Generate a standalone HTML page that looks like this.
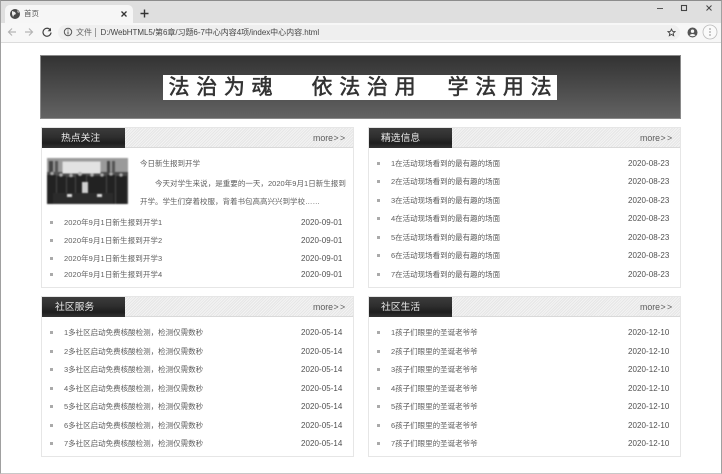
<!DOCTYPE html>
<html lang="zh">
<head>
<meta charset="utf-8">
<title>首页</title>
<style>
html,body{margin:0;padding:0;background:#fff}
body{width:722px;height:474px;position:relative;overflow:hidden;font-family:"Liberation Sans","Noto Sans CJK SC",sans-serif;color:#555}
div,span,svg{position:absolute;white-space:nowrap}
.frame{left:0;top:0;width:720px;height:472px;border:1px solid #a0a0a0;border-bottom:1px solid #c8c8c8;border-top:1px solid #8c8c8c;z-index:9}
.strip{left:1px;top:1px;width:720px;height:22px;background:#dfdfdf}
.tab{left:5px;top:5px;width:128px;height:18px;background:#f6f6f6;border-radius:5px 5px 0 0}
.bar{left:1px;top:23px;width:720px;height:19px;background:#f7f7f7;border-bottom:1px solid #dcdcdc}
.url{left:58px;top:25px;width:622px;height:15px;background:#efefef;border-radius:8px}
.banner{left:40px;top:55px;width:639px;height:62px;background:linear-gradient(#333,#636363);border:1px solid #8a8a8a}
.tbox{left:163px;top:75px;width:394px;height:25px;background:#fff}
.tt{top:74px;font-size:21px;line-height:27px;letter-spacing:6.7px;color:#333;-webkit-text-stroke:.55px #333}
.panel{width:311px;background:#fff;border:1px solid #e6e6e6}
.head{height:19px;background:repeating-linear-gradient(135deg,#e6e6e6 0,#e6e6e6 1px,#f3f3f3 1px,#f3f3f3 2px);border-bottom:1px solid #d9d9d9}
.dark{width:83px;height:20px;background:linear-gradient(#3c3c3c,#2e2e2e 45%,#1e1e1e 75%,#333)}
.ht{font-size:9.800px;line-height:20px;color:#e8e8e8}
.more{font-size:8.800px;line-height:20px;color:#5c5c5c}
.more b{font-weight:normal;letter-spacing:1.300px;margin-left:.5px}
.r{font-size:7.500px;line-height:12px;color:#5e5e5e;margin-top:1px}
.w{letter-spacing:.1px}
.d{font-size:8px;line-height:12px;color:#505050;letter-spacing:.05px;margin-top:1px}
.b{width:3px;height:3px;background:#aaa}
.blur{left:0;top:0;width:722px;height:474px;filter:blur(.35px)}
</style>
</head>
<body>
<div class="blur">
<div class="strip"></div>
<div class="tab"></div>
<svg style="left:9px;top:8px" width="12" height="12" viewBox="0 0 12 12"><circle cx="6" cy="6" r="5" fill="#4a4a4a"/><path d="M3 3l3 1 1 2-2 1-1 2-1-3zM8 2l2 2-1 1z" fill="#eee"/></svg>
<span style="left:24px;top:9px;font-size:7.500px;line-height:10px;color:#555">首页</span>
<svg style="left:120px;top:10px" width="8" height="8" viewBox="0 0 8 8"><path d="M1.500 1.500l5 5M6.500 1.500l-5 5" stroke="#333" stroke-width="1.300"/></svg>
<svg style="left:140px;top:9px" width="9" height="9" viewBox="0 0 9 9"><path d="M4.500 .5v8M.5 4.500h8" stroke="#333" stroke-width="1.400"/></svg>
<svg style="left:657px;top:2px" width="60" height="12" viewBox="0 0 60 12"><path d="M0 6.500h6" stroke="#555"/><rect x="24.500" y="3.500" width="5" height="5" fill="none" stroke="#444" stroke-width="1.100"/><path d="M49.500 3.500l5 5M54.500 3.500l-5 5" stroke="#444"/></svg>
<div class="bar"></div>
<div class="url"></div>
<svg style="left:7px;top:27px" width="10" height="10" viewBox="0 0 10 10"><path d="M9 5H1.500M5 1.500L1.500 5 5 8.500" fill="none" stroke="#b5b5b5" stroke-width="1.200"/></svg>
<svg style="left:24px;top:27px" width="10" height="10" viewBox="0 0 10 10"><path d="M1 5h7.500M5 1.500L8.500 5 5 8.500" fill="none" stroke="#b5b5b5" stroke-width="1.200"/></svg>
<svg style="left:42px;top:27px" width="10" height="10" viewBox="0 0 10 10"><path d="M8.500 3.300A4 4 0 1 0 9 5.500" fill="none" stroke="#444" stroke-width="1.200"/><path d="M9 .8v3.400H5.600z" fill="#444"/></svg>
<svg style="left:63px;top:27px" width="10" height="10" viewBox="0 0 10 10"><circle cx="5" cy="5" r="3.700" fill="none" stroke="#555"/><path d="M5 4.500v3M5 2.500v1" stroke="#555"/></svg>
<span style="left:76px;top:27px;font-size:8px;line-height:11px;color:#666">文件</span>
<div style="left:95px;top:28px;width:1px;height:9px;background:#999"></div>
<span style="left:100.500px;top:27px;font-size:8px;line-height:11px;color:#444;letter-spacing:-.04px">D:/WebHTML5/第6章/习题6-7中心内容4项/index中心内容.html</span>
<svg style="left:667px;top:28px" width="9" height="9" viewBox="0 0 11 11"><path d="M5.500 1.300l1.300 2.800 3 .3-2.300 2 .7 3-2.700-1.600-2.700 1.600.7-3-2.300-2 3-.3z" fill="none" stroke="#444" stroke-width="1.100"/></svg>
<svg style="left:687px;top:27px" width="11" height="11" viewBox="0 0 11 11"><circle cx="5.500" cy="5.500" r="5" fill="#555"/><circle cx="5.500" cy="4.200" r="1.700" fill="#f7f7f7"/><path d="M2.500 8.300c1.200-1.700 4.800-1.700 6 0-1.500 1.300-4.500 1.300-6 0z" fill="#f7f7f7"/></svg>
<svg style="left:702px;top:24px" width="16" height="16" viewBox="0 0 16 16"><circle cx="8" cy="8" r="7" fill="#fafafa" stroke="#bbb" stroke-width=".8"/><path d="M8 4.500v1M8 7.500v1M8 10.500v1" stroke="#444" stroke-width="1.100"/></svg>

<div class="banner"></div>
<div class="tbox"></div>
<span class="tt" style="left:168.500px">法治为魂</span>
<span class="tt" style="left:311.500px">依法治用</span>
<span class="tt" style="left:447.500px">学法用法</span>

<!-- panel 1 -->
<div class="panel" style="left:41px;top:127px;height:159px"><div class="head" style="position:absolute;left:0;top:0;width:311px"><div class="dark" style="left:0;top:0"></div></div></div>
<span class="ht" style="left:61px;top:128.500px">热点关注</span>
<span class="more" style="left:313px;top:128px">more<b>&gt;&gt;</b></span>
<svg style="left:47px;top:158px;filter:blur(.7px)" width="81" height="46" viewBox="0 0 81 46">
<rect width="81" height="46" fill="#4a4a4a"/>
<rect width="81" height="14" fill="#9a9a9a"/>
<rect x="15.500" y="3.500" width="38" height="12" fill="#e2e2e2"/>
<rect x="2" y="3" width="4" height="14" fill="#444"/>
<rect x="8" y="3" width="3" height="14" fill="#555"/>
<rect x="60" y="3" width="3" height="14" fill="#444"/>
<rect x="65" y="3" width="3" height="14" fill="#555"/>
<g fill="#222"><rect x="0" y="17" width="9" height="29"/><rect x="10" y="18" width="9" height="18"/><rect x="20" y="19" width="8" height="17"/><rect x="29" y="17" width="10" height="19"/><rect x="40" y="18" width="10" height="18"/><rect x="50" y="18" width="9" height="18"/><rect x="60" y="17" width="8" height="29"/><rect x="69" y="18" width="11" height="28"/></g>
<rect x="35" y="24" width="6" height="12" fill="#cfcfcf"/>
<g fill="#aaa"><circle cx="5" cy="15.500" r="1.800"/><circle cx="14" cy="17" r="1.800"/><circle cx="24" cy="17.500" r="1.800"/><circle cx="33" cy="16" r="2"/><circle cx="45" cy="17" r="1.800"/><circle cx="55" cy="17" r="1.800"/><circle cx="64" cy="16" r="1.800"/><circle cx="74" cy="17" r="1.800"/></g>
<rect x="6" y="35" width="60" height="11" fill="#2b2b2b"/>
<rect x="20" y="36" width="5" height="3" fill="#ddd"/><rect x="50" y="36" width="5" height="3" fill="#ddd"/>
</svg>
<span class="r" style="left:140px;top:157px">今日新生报到开学</span>
<span class="r" style="left:155px;top:177px;letter-spacing:.03px">今天对学生来说，是重要的一天，2020年9月1日新生报到</span>
<span class="r" style="left:140px;top:195px">开学。学生们穿着校服，背着书包高高兴兴到学校……</span>
<div class="b" style="left:50px;top:221px"></div><span class="r w" style="left:64px;top:216px">2020年9月1日新生报到开学1</span><span class="d" style="left:301px;top:216px">2020-09-01</span>
<div class="b" style="left:50px;top:239px"></div><span class="r w" style="left:64px;top:234px">2020年9月1日新生报到开学2</span><span class="d" style="left:301px;top:234px">2020-09-01</span>
<div class="b" style="left:50px;top:257px"></div><span class="r w" style="left:64px;top:252px">2020年9月1日新生报到开学3</span><span class="d" style="left:301px;top:252px">2020-09-01</span>
<div class="b" style="left:50px;top:273px"></div><span class="r w" style="left:64px;top:268px">2020年9月1日新生报到开学4</span><span class="d" style="left:301px;top:268px">2020-09-01</span>

<!-- panel 2 -->
<div class="panel" style="left:368px;top:127px;height:159px"><div class="head" style="position:absolute;left:0;top:0;width:311px"><div class="dark" style="left:0;top:0"></div></div></div>
<span class="ht" style="left:381px;top:128.500px">精选信息</span>
<span class="more" style="left:640px;top:128px">more<b>&gt;&gt;</b></span>
<div class="b" style="left:377px;top:162px"></div><span class="r" style="left:391px;top:157px">1在活动现场看到的最有趣的场面</span><span class="d" style="left:628px;top:157px">2020-08-23</span>
<div class="b" style="left:377px;top:180px"></div><span class="r" style="left:391px;top:175px">2在活动现场看到的最有趣的场面</span><span class="d" style="left:628px;top:175px">2020-08-23</span>
<div class="b" style="left:377px;top:199px"></div><span class="r" style="left:391px;top:194px">3在活动现场看到的最有趣的场面</span><span class="d" style="left:628px;top:194px">2020-08-23</span>
<div class="b" style="left:377px;top:217px"></div><span class="r" style="left:391px;top:212px">4在活动现场看到的最有趣的场面</span><span class="d" style="left:628px;top:212px">2020-08-23</span>
<div class="b" style="left:377px;top:236px"></div><span class="r" style="left:391px;top:231px">5在活动现场看到的最有趣的场面</span><span class="d" style="left:628px;top:231px">2020-08-23</span>
<div class="b" style="left:377px;top:254px"></div><span class="r" style="left:391px;top:249px">6在活动现场看到的最有趣的场面</span><span class="d" style="left:628px;top:249px">2020-08-23</span>
<div class="b" style="left:377px;top:273px"></div><span class="r" style="left:391px;top:268px">7在活动现场看到的最有趣的场面</span><span class="d" style="left:628px;top:268px">2020-08-23</span>

<!-- panel 3 -->
<div class="panel" style="left:41px;top:296px;height:159px"><div class="head" style="position:absolute;left:0;top:0;width:311px"><div class="dark" style="left:0;top:0"></div></div></div>
<span class="ht" style="left:55px;top:297.500px">社区服务</span>
<span class="more" style="left:313px;top:297px">more<b>&gt;&gt;</b></span>
<div class="b" style="left:50px;top:331px"></div><span class="r" style="left:64px;top:326px">1多社区启动免费核酸检测，检测仅需数秒</span><span class="d" style="left:301px;top:326px">2020-05-14</span>
<div class="b" style="left:50px;top:350px"></div><span class="r" style="left:64px;top:345px">2多社区启动免费核酸检测，检测仅需数秒</span><span class="d" style="left:301px;top:345px">2020-05-14</span>
<div class="b" style="left:50px;top:368px"></div><span class="r" style="left:64px;top:363px">3多社区启动免费核酸检测，检测仅需数秒</span><span class="d" style="left:301px;top:363px">2020-05-14</span>
<div class="b" style="left:50px;top:387px"></div><span class="r" style="left:64px;top:382px">4多社区启动免费核酸检测，检测仅需数秒</span><span class="d" style="left:301px;top:382px">2020-05-14</span>
<div class="b" style="left:50px;top:405px"></div><span class="r" style="left:64px;top:400px">5多社区启动免费核酸检测，检测仅需数秒</span><span class="d" style="left:301px;top:400px">2020-05-14</span>
<div class="b" style="left:50px;top:424px"></div><span class="r" style="left:64px;top:419px">6多社区启动免费核酸检测，检测仅需数秒</span><span class="d" style="left:301px;top:419px">2020-05-14</span>
<div class="b" style="left:50px;top:442px"></div><span class="r" style="left:64px;top:437px">7多社区启动免费核酸检测，检测仅需数秒</span><span class="d" style="left:301px;top:437px">2020-05-14</span>

<!-- panel 4 -->
<div class="panel" style="left:368px;top:296px;height:159px"><div class="head" style="position:absolute;left:0;top:0;width:311px"><div class="dark" style="left:0;top:0"></div></div></div>
<span class="ht" style="left:381px;top:297.500px">社区生活</span>
<span class="more" style="left:640px;top:297px">more<b>&gt;&gt;</b></span>
<div class="b" style="left:377px;top:331px"></div><span class="r" style="left:391px;top:326px">1孩子们眼里的圣诞老爷爷</span><span class="d" style="left:628px;top:326px">2020-12-10</span>
<div class="b" style="left:377px;top:350px"></div><span class="r" style="left:391px;top:345px">2孩子们眼里的圣诞老爷爷</span><span class="d" style="left:628px;top:345px">2020-12-10</span>
<div class="b" style="left:377px;top:368px"></div><span class="r" style="left:391px;top:363px">3孩子们眼里的圣诞老爷爷</span><span class="d" style="left:628px;top:363px">2020-12-10</span>
<div class="b" style="left:377px;top:387px"></div><span class="r" style="left:391px;top:382px">4孩子们眼里的圣诞老爷爷</span><span class="d" style="left:628px;top:382px">2020-12-10</span>
<div class="b" style="left:377px;top:405px"></div><span class="r" style="left:391px;top:400px">5孩子们眼里的圣诞老爷爷</span><span class="d" style="left:628px;top:400px">2020-12-10</span>
<div class="b" style="left:377px;top:424px"></div><span class="r" style="left:391px;top:419px">6孩子们眼里的圣诞老爷爷</span><span class="d" style="left:628px;top:419px">2020-12-10</span>
<div class="b" style="left:377px;top:442px"></div><span class="r" style="left:391px;top:437px">7孩子们眼里的圣诞老爷爷</span><span class="d" style="left:628px;top:437px">2020-12-10</span>
</div>
<div class="frame"></div>
</body>
</html>
